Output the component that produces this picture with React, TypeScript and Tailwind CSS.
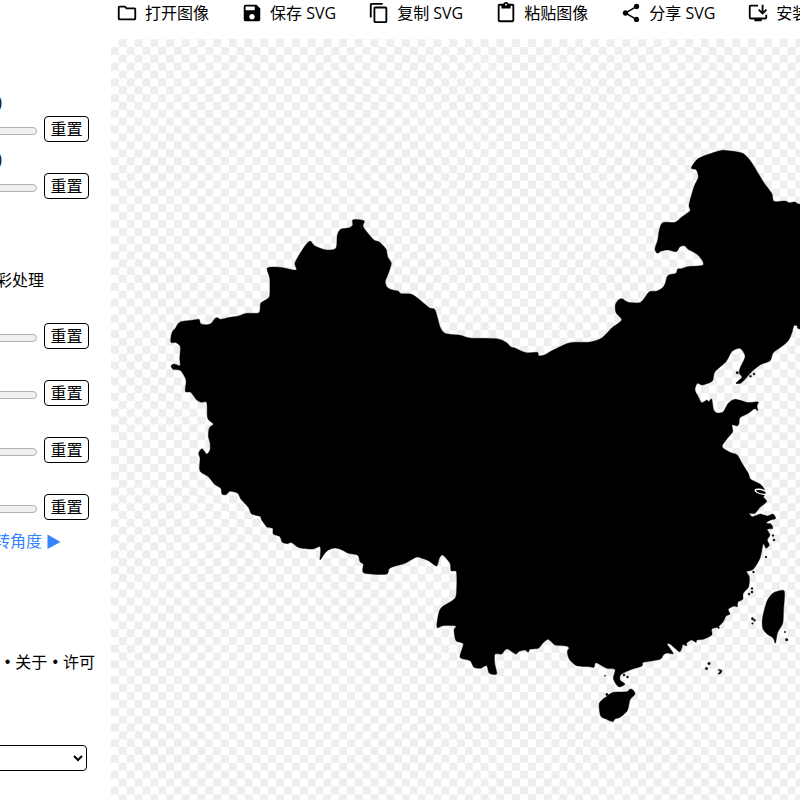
import React, { useState } from "react";
import {
  MdContentCopy,
  MdContentPaste,
  MdInstallDesktop,
  MdOutlineFolder,
  MdSave,
  MdShare,
} from "react-icons/md";

const tools = [
  { label: "打开图像", Icon: MdOutlineFolder },
  { label: "保存 SVG", Icon: MdSave },
  { label: "复制 SVG", Icon: MdContentCopy },
  { label: "粘贴图像", Icon: MdContentPaste },
  { label: "分享 SVG", Icon: MdShare },
  { label: "安装", Icon: MdInstallDesktop },
];

const mainland =
  "171 342.5L171 336.7L172.3 331.7L175.7 327.7L178.3 323.3L182.7 321.3L191.7 320.3L199 319.3L200.7 323.7L206.7 324.7L211.3 323.3L215 318.3L217.7 317.7L220.7 319.3L230 317.3L237.3 316.3L246.7 313.3L259 312.7L260.7 303.3L266.7 299.3L269.7 295.3L269.7 278.3L267.3 268L280 267.3L296 270L295 262.7L304 247.3L310 241L315 246L326.7 250L336 248L337.3 235L340.7 229.3L349.3 227.7L352.7 225L353 219.7L364 220.7L363 226L366.7 231.7L374 240L379.3 242L386 249L387.7 256.7L391.3 263.3L389 271.7L385.3 281.7L387.3 287.3L391.7 289.7L398 291L401.7 293.7L411.7 294.3L420 300L429.3 307.7L434.7 309.3L437.7 318.3L440 326.7L445 333.3L460 335.3L470.7 338L496.7 338.7L506 342.3L510.7 346.7L515 348L526 352.7L537.3 352.3L538.7 355.7L544.3 355L553.3 350L570 342.7L590 342L601.7 338L611.7 328L621.7 320L616 312.7L615.3 305L618.3 300L622.3 298.7L628.3 302.3L639.3 302.7L644 298.7L649.3 291.7L656.7 291L662.7 287.7L665.3 283.3L667 276.7L670 274.5L676 273.3L677.7 269L681.7 268.7L687.3 266.7L702.7 265.3L702 260L696.7 254L688.3 249.3L685 246L680 246.7L676.3 251.7L668.3 250L661.7 251L657.3 253.3L655 249L657.7 240L659.3 230L662.7 222.7L675 222.3L681.7 217L690 210.7L689 205L694 186.7L698.3 177.3L696.3 170L691.3 168L697.3 159.3L708.3 154.3L720 150.7L725 150.3L742.7 153.3L751.7 162.7L763.3 181.7L771.7 193.3L774 201.3L785 201L789.3 202.7L795 202L800 204.3L830 210L830 334L800 329L797.3 326L794 325.7L791.7 333.3L788.3 340.7L781 347L773.3 352.7L770 360.7L760 365L751.7 371.7L745 379.3L740.7 383.3L736 383.3L738.3 380.7L742 377.3L739.3 373.3L740 368.3L745 357.3L743.3 351.7L739.3 348.3L731.7 351.7L726 361.7L715 371.7L712.3 381L702.7 385L697.3 383.3L695 390L698.3 396.7L701.7 402.7L706.7 400L709 401.5L711.7 399L713.7 410L717.3 413L723.3 411.7L728.3 403.3L735 399.3L746.7 402.3L752 402.5L758.3 402L757 406L757.7 410.7L754.5 408.7L748.3 413.3L740 417.7L739 423L737.3 426L732 425L732.7 431.7L726.7 439.3L722.3 446.7L730 452.3L737.3 455L741.7 462.7L748.3 473.3L750.7 479.3L760 484L764 488.5L765 491L765.5 494L763.5 497L766.7 501.7L760 507.3L755 513.3L749.3 513.3L752.7 516.7L760 514L767.3 516L773 514L775.7 518.5L770.7 520L766 523L771 524L772.7 528.5L767.3 529.3L770 535L767.3 540L769.3 545L766 548.3L763.3 544L760 558.3L753.3 569.3L746.7 571.7L749.3 576.7L748.7 586.7L743.3 593.3L742.7 599.3L738 602L737.3 606.7L734 606L728.3 609.3L730 614L726 616L723.3 621.7L717.3 627.3L711.7 629L711.7 635L703.3 639.3L697 640L696 642.5L691.7 640L686.7 643L686.7 646L683 644.5L681.7 648.3L679.3 651.7L670 644L667.3 644.5L673.3 653.5L667 653L663.3 655L660 659.3L643.3 662.5L642 666L630 670L621 674.5L620 680L625 684L620 687L616.7 685L613.3 678.3L615 669.5L606.7 668.3L596 662.7L594 667.3L588 666.5L576.7 665.7L569.3 659.3L567.3 651.7L569 648L566 646L555 645L548.3 639.3L543 643L538.3 648.3L530 649.3L528.3 652.3L525 650L519 651.5L515.7 654L508.3 649.3L505 650L501.7 654L495 654.3L494.7 663.3L496.7 674L489.3 673.3L486.7 665.7L480.7 668.3L474 667.3L470 660.7L460 657.3L463.3 644L456 640.7L454 630L455.7 626L443.3 625.7L437 627.3L438.3 615L441.7 607.3L455 598.3L456.7 586.7L456.3 571.7L451 570.7L450 563.3L442.7 555L439.3 558.3L436.7 566L428.3 560.7L421 558L416 557.3L405 563.3L393.3 566.7L389 569L386 574.3L364 573L363.3 564.3L360 561.7L357.7 555.3L348.3 553.3L341 549.5L335 548L329 549.7L325 553L320 560L320.5 554L320 546.7L312.7 549L299.3 547.7L291.7 542.7L287.3 543.7L282 542L280 536.7L273.3 534L272.7 528.3L267.3 527.3L261.7 520L260 516.3L251.7 514L248.3 507.3L241 499.3L237.7 493.3L230 491.3L226 494.7L222 494L220.7 488.3L214.3 484L208.3 476.7L201 472.3L199.5 468L200 458.3L198.7 453.3L202 448.7L206.7 454L210 450L210 443L208.3 436L209.3 428L213.3 424L207.7 418.3L206.7 402.7L201.5 402.3L196.7 400L190.7 392.3L185.3 391.3L186 380L180.7 370.7L173.3 369.5L171 366L174 364L180 365.5L179.7 358L180.3 346.7L176 342.7";

const islands = [
  "599.3 703.3L606.7 696.5L613.3 692.3L626.7 691.7L630 689L633 690L635 694L630 700L627.3 710.7L620 717.3L615 719L612.7 721.7L606 719L600.7 716",
  "772 594L776.7 591.5L784.3 591.3L783.5 611L782.7 623.3L777.5 632.7L776.5 638L775.3 643.3L773 638L767 634L762.7 628.3L762.5 618.3L766.7 601.7",
  "718 669.5L722 670.5L720.5 673.5L718 674L720 671.5",
];

// cx, cy, r
const islets = [
  [737.3, 372.7, 1.2],
  [750.5, 376.3, 1],
  [754, 374, 1],
  [607, 694.5, 1.2],
  [605, 675.7, 0.6],
  [624, 675, 1.1],
  [627.5, 677, 1],
  [706.5, 668.5, 1.2],
  [709, 663.5, 1.3],
  [752.5, 618.7, 1.2],
  [754.5, 620.3, 1],
  [752.5, 623.5, 0.8],
  [753.5, 572, 1],
  [752, 588.5, 1],
  [752, 592, 1.1],
  [749, 594, 1],
  [766, 557, 0.9],
  [773, 535.5, 0.9],
  [774, 540, 1],
  [785, 632, 0.8],
  [786.7, 639.7, 1.3],
  [718.5, 627.5, 0.9],
];

// closed curve through all the points
function smooth(line: string) {
  const pts = line.split("L").map((p) => p.split(" ").map(Number));
  const n = pts.length;
  const t = 0.13;
  let d = `M${pts[0][0]} ${pts[0][1]}`;
  for (let i = 0; i < n; i++) {
    const a = pts[(i - 1 + n) % n];
    const b = pts[i];
    const c = pts[(i + 1) % n];
    const e = pts[(i + 2) % n];
    d += `C${b[0] + (c[0] - a[0]) * t} ${b[1] + (c[1] - a[1]) * t} ${c[0] - (e[0] - b[0]) * t} ${c[1] - (e[1] - b[1]) * t} ${c[0]} ${c[1]}`;
  }
  return d + "Z";
}

const Artwork = () => (
  <svg
    viewBox="111 39 689 761"
    preserveAspectRatio="xMinYMin slice"
    className="block h-full w-full"
    role="img"
  >
    <defs>
      <pattern id="checker" x="111" y="39.1" width="15.733" height="15.733" patternUnits="userSpaceOnUse">
        <rect width="15.733" height="15.733" fill="#fff" />
        <rect x="7.867" width="7.866" height="7.867" fill="#eee" />
        <rect y="7.867" width="7.867" height="7.866" fill="#eee" />
      </pattern>
    </defs>
    <rect x="111" y="39" width="1400" height="1400" fill="url(#checker)" />
    <g stroke="#000" strokeWidth="0.4" strokeLinejoin="round">
      <path d={smooth(mainland)} />
      {islands.map((line) => (
        <path key={line} d={smooth(line)} />
      ))}
      {islets.map(([cx, cy, r]) => (
        <circle key={`${cx}-${cy}`} cx={cx} cy={cy} r={r} />
      ))}
    </g>
    <path
      d="M766 491.5Q761 488.5 756 489.5Q754 490 757 492.5Q761 494.5 766 494.5"
      fill="none"
      stroke="#fff"
      strokeWidth="1.3"
    />
  </svg>
);

const Slider = ({ id, label = "" }: { id: string; label?: string }) => {
  const [value, setValue] = useState(0);
  return (
    <div className="flex h-[57px] flex-col items-end pr-[22px]">
      <label htmlFor={id} className="h-6 w-[310px] pr-[87px] text-right leading-5">
        {label}
      </label>
      <div className="flex items-center gap-[7px]">
        <input
          id={id}
          type="range"
          min={0}
          max={100}
          value={value}
          onChange={(e) => setValue(Number(e.target.value))}
          className="mt-1 h-2 w-[220px] appearance-none rounded-full border border-[#b2b2b2] bg-[#efefef]"
        />
        <button
          type="button"
          onClick={() => setValue(0)}
          className="h-[26px] w-[45px] rounded-[4px] border border-black bg-white leading-6"
        >
          重置
        </button>
      </div>
    </div>
  );
};

const App = () => {
  return (
    <div className="flex h-screen overflow-hidden bg-white font-['Open_Sans','Noto_Sans_CJK_SC',sans-serif] text-base text-black">
      <aside className="flex w-[111px] shrink-0 flex-col items-end overflow-hidden whitespace-nowrap pt-[92px]">
        <Slider id="speckle" label=")" />
        <Slider id="smooth" label=")" />
        <p className="mt-[62px] pr-[67px] leading-6">色彩处理</p>
        <div className="mt-[7px]">
          <Slider id="red" />
          <Slider id="green" />
          <Slider id="blue" />
          <Slider id="alpha" />
        </div>
        <a href="#rotate" className="mt-[2px] flex items-center gap-[5px] pr-[50px] leading-6 text-[#3584ff]">
          旋转角度
          <svg viewBox="0 0 14 16" className="h-4 w-[14px] fill-current">
            <path d="M0.5 1.5L13.5 9L0.5 16Z" />
          </svg>
        </a>
        <nav className="mt-[97px] flex gap-[5px] pr-4 leading-6">
          <span className="font-['Liberation_Sans',sans-serif]">•</span>
          <a href="#about">关于</a>
          <span className="font-['Liberation_Sans',sans-serif]">•</span>
          <a href="#license">许可</a>
        </nav>
        <select
          aria-label="语言"
          className="mr-6 mt-[71px] h-[26px] w-[260px] shrink-0 rounded-[4px] border border-black bg-white"
        >
          <option>中文</option>
        </select>
      </aside>
      <main className="flex min-w-0 flex-1 flex-col">
        <div className="flex h-[39px] shrink-0 gap-8 overflow-hidden whitespace-nowrap pl-[5px]">
          {tools.map(({ label, Icon }) => (
            <button key={label} type="button" className="flex h-[26px] shrink-0 items-center gap-[7px]">
              <Icon className="size-[22px]" />
              {label}
            </button>
          ))}
        </div>
        <div className="min-h-0 flex-1">
          <Artwork />
        </div>
      </main>
    </div>
  );
};

export default App;
